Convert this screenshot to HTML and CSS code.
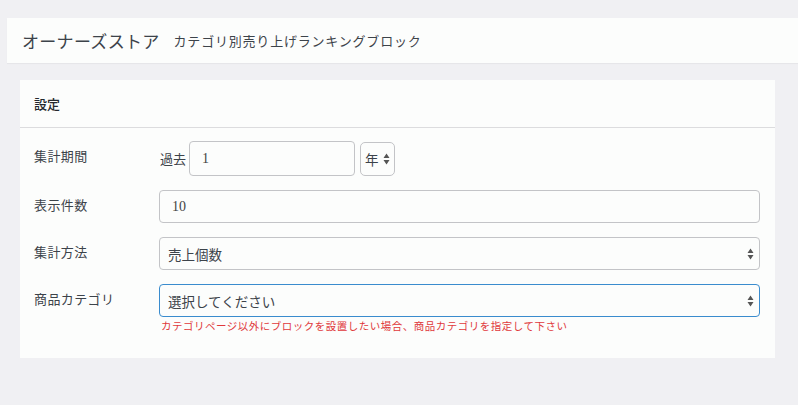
FILE: index.html
```html
<!DOCTYPE html>
<html lang="ja">
<head>
<meta charset="utf-8">
<link rel="stylesheet" href="styles.css">
</head>
<body>
<div class="header">
  <h1 class="title">オーナーズストア</h1>
  <span class="subtitle">カテゴリ別売り上げランキングブロック</span>
</div>
<div class="card">
  <div class="card-head">設定</div>
  <div class="form">
    <div class="label">集計期間</div>
    <div class="ctrl period">
      <span class="prefix">過去</span>
      <input class="input num short" type="text" value="1">
      <div class="sel-wrap unit">
        <select class="select"><option>年</option></select>
        <svg class="arrow" width="7" height="12" viewBox="0 0 7 12"><path d="M3.5 0.5 L6.5 5 L0.5 5 Z M0.5 7 L6.5 7 L3.5 11.5 Z" fill="#555"/></svg>
      </div>
    </div>

    <div class="label">表示件数</div>
    <div class="ctrl"><input class="input num" type="text" value="10"></div>

    <div class="label">集計方法</div>
    <div class="ctrl">
      <div class="sel-wrap">
        <select class="select"><option>売上個数</option></select>
        <svg class="arrow" width="7" height="12" viewBox="0 0 7 12"><path d="M3.5 0.5 L6.5 5 L0.5 5 Z M0.5 7 L6.5 7 L3.5 11.5 Z" fill="#555"/></svg>
      </div>
    </div>

    <div class="label">商品カテゴリ</div>
    <div class="ctrl">
      <div class="sel-wrap">
        <select class="select focus"><option>選択してください</option></select>
        <svg class="arrow" width="7" height="12" viewBox="0 0 7 12"><path d="M3.5 0.5 L6.5 5 L0.5 5 Z M0.5 7 L6.5 7 L3.5 11.5 Z" fill="#555"/></svg>
      </div>
      <p class="help">カテゴリページ以外にブロックを設置したい場合、商品カテゴリを指定して下さい</p>
    </div>
  </div>
</div>
</body>
</html>
```

FILE: styles.css
```css
* { box-sizing: border-box; }
html, body { margin: 0; padding: 0; }
body {
  background: #f0f0f3;
  font-family: "Noto Sans CJK JP", "Noto Sans", sans-serif;
  color: #3c434a;
  padding: 18px 0 0 7px;
  width: 798px;
  height: 405px;
  overflow: hidden;
}
.header {
  height: 45px;
  background: #fcfdfc;
  display: flex;
  align-items: center;
  padding-left: 15px;
  box-shadow: 0 1px 1px rgba(0,0,0,0.04);
}
.title {
  margin: 0;
  font-size: 17px;
  font-weight: 400;
  color: #3c434a;
  letter-spacing: 0.3px;
}
.subtitle {
  margin-left: 14px;
  font-size: 13px;
  color: #3c434a;
  letter-spacing: 0.8px;
}
.card {
  margin: 17px 23px 0 13px;
  height: 278px;
  background: #fcfdfc;
}
.card-head {
  height: 48px;
  padding-left: 14px;
  display: flex;
  align-items: center;
  font-size: 13px;
  font-weight: 500;
  color: #23282d;
  border-bottom: 1px solid #dcdcde;
}
.form {
  display: grid;
  grid-template-columns: 125px 601px;
  row-gap: 14px;
  padding: 13px 0 0 14px;
}
.label {
  font-size: 13px;
  padding-top: 5px;
  color: #3c434a;
  letter-spacing: 0.4px;
}
.ctrl { position: relative; }
.period {
  display: flex;
  align-items: center;
  gap: 3px;
}
.prefix {
  font-size: 13px;
  margin-left: 1px;
}
.input, .select {
  display: block;
  width: 100%;
  height: 33px;
  border: 1px solid #c3c4c7;
  border-radius: 4px;
  background: #fcfdfc;
  color: #3c434a;
  padding: 0 8px;
  font-size: 13.5px;
  font-family: "Noto Sans CJK JP", "Noto Sans", sans-serif;
  outline: none;
}
.num {
  font-family: "Liberation Serif", "Noto Sans CJK JP", serif;
  font-size: 14px;
  color: #444;
  padding: 0 12px;
}
.short { width: 166px; height: 35px; }
.select {
  -webkit-appearance: none;
  appearance: none;
  padding-right: 24px;
}
.select.focus { border-color: #3a8cce; }
.sel-wrap { position: relative; }
.unit { width: 35px; margin-left: 2px; }
.unit .select {
  height: 34px;
  padding: 0 0 0 4px;
  border-radius: 5px;
}
.arrow {
  position: absolute;
  right: 6px;
  top: 50%;
  margin-top: -6px;
}
.unit .arrow { right: 5px; }
.help {
  margin: 1px 0 0 2px;
  font-size: 10.5px;
  color: #e0393b;
  letter-spacing: 0.5px;
}
```
